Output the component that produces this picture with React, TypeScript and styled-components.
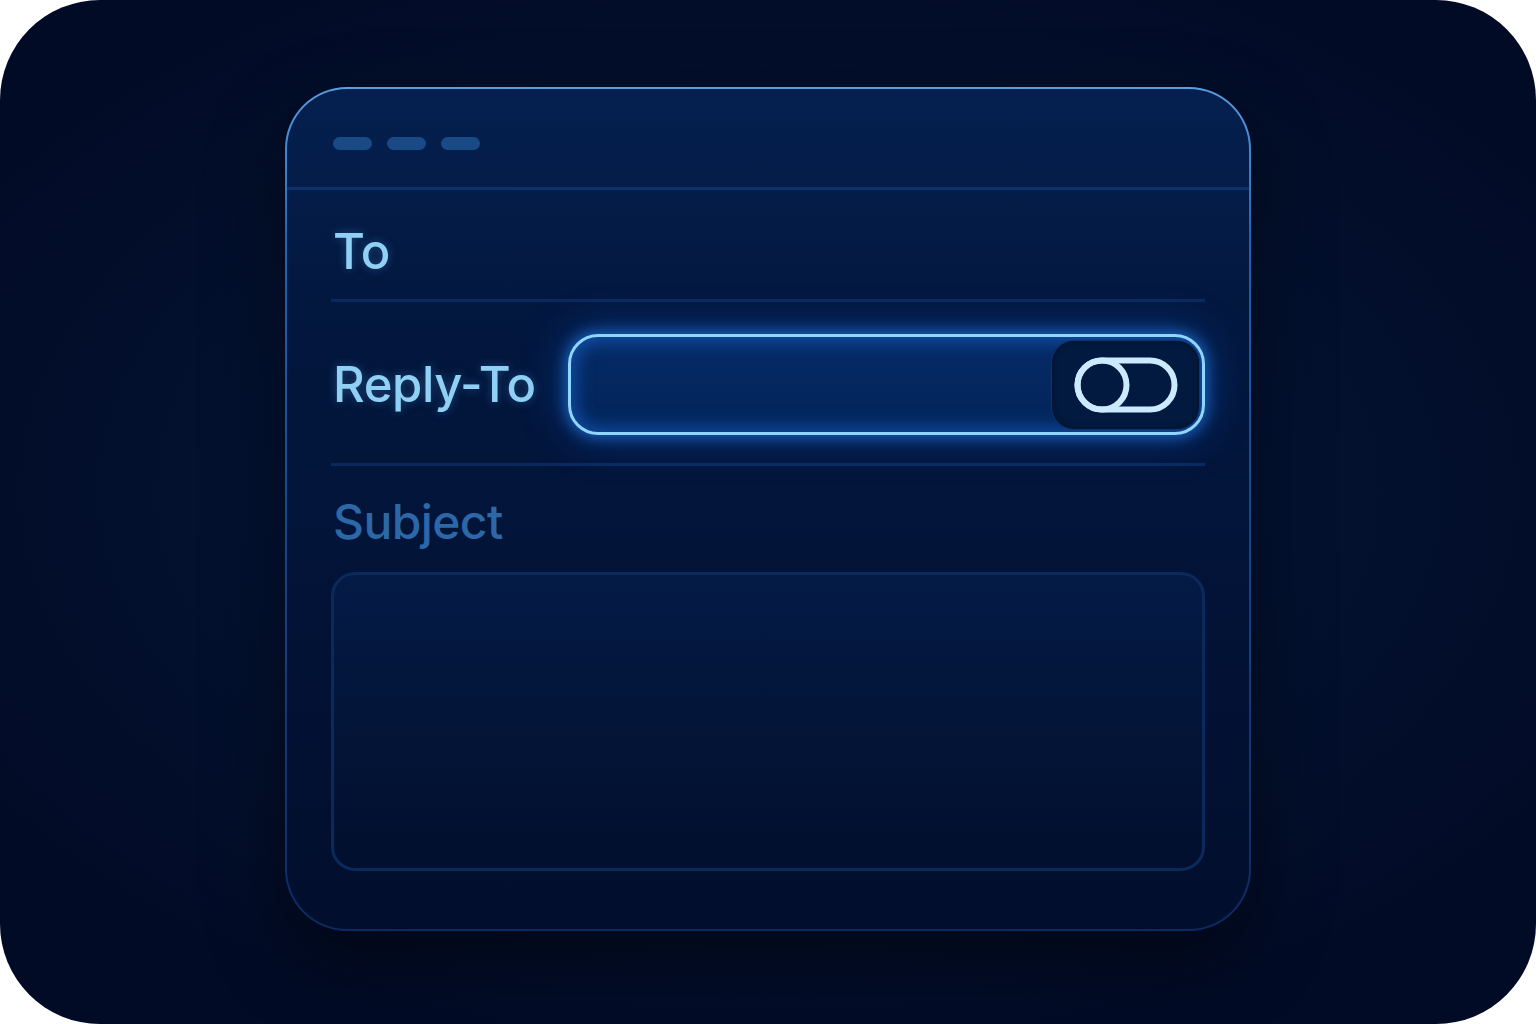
import React from "react";
import styled, { createGlobalStyle } from "styled-components";

const GlobalStyle = createGlobalStyle`
  html, body {
    margin: 0;
    padding: 0;
    background: #ffffff;
  }
  * {
    box-sizing: border-box;
  }
`;

const Frame = styled.div`
  width: 1536px;
  height: 1024px;
  border-radius: 100px;
  overflow: hidden;
  background: radial-gradient(ellipse 60% 55% at 50% 48%, #061a45 0%, #03112f 60%, #020b26 100%);
  display: flex;
  justify-content: center;
  padding-top: 87px;
  font-family: Inter, "Noto Sans", sans-serif;
`;

const Card = styled.div`
  width: 966px;
  height: 844px;
  border-radius: 62px;
  border: 2px solid transparent;
  background:
    linear-gradient(180deg, #052050 0%, #03183f 25%, #021337 60%, #020e2d 100%) padding-box,
    linear-gradient(180deg, #5b9fe0 0%, #2463ae 18%, #17488c 50%, #0c2a62 100%) border-box;
  box-shadow: 0 30px 80px rgba(0, 0, 0, 0.45);
  display: flex;
  flex-direction: column;
  overflow: hidden;
`;

const Header = styled.div`
  height: 101px;
  display: flex;
  align-items: center;
  gap: 15px;
  padding-left: 46px;
  padding-top: 10px;
  border-bottom: 3px solid #0d3169;
`;

const Dot = styled.span`
  width: 39px;
  height: 13px;
  border-radius: 7px;
  background: #1a4a86;
`;

const Body = styled.div`
  flex: 1;
  display: flex;
  flex-direction: column;
  padding: 0 44px 58px 44px;
`;

const Row = styled.div<{ $h: number; $shift?: number; $divider?: boolean }>`
  height: ${(p) => p.$h}px;
  padding-top: ${(p) => (p.$shift ?? 0) * 2}px;
  display: flex;
  align-items: center;
  gap: 32px;
  border-bottom: ${(p) => (p.$divider ? "3px solid #0a2a5e" : "none")};
`;

const Label = styled.span<{ $dim?: boolean }>`
  font-size: ${(p) => (p.$dim ? 48 : 49)}px;
  font-weight: 500;
  letter-spacing: ${(p) => (p.$dim ? "-0.6px" : "-0.4px")};
  padding-left: 2px;
  color: ${(p) => (p.$dim ? "#2c67a8" : "#8fd0f4")};
  text-shadow: ${(p) => (p.$dim ? "none" : "0 0 10px rgba(90, 170, 240, 0.35)")};
`;

const Input = styled.div`
  flex: 1;
  height: 101px;
  border-radius: 30px;
  border: 3px solid #8ed6ff;
  background: linear-gradient(180deg, #062b66 0%, #03245a 100%);
  box-shadow:
    0 0 14px 3px rgba(40, 140, 255, 0.55),
    0 0 40px 8px rgba(20, 100, 230, 0.3),
    inset 0 0 18px 4px rgba(30, 120, 240, 0.5);
  display: flex;
  justify-content: flex-end;
  align-items: center;
  padding-right: 3px;
`;

const ToggleWell = styled.div`
  width: 147px;
  height: 88px;
  border-radius: 22px;
  background: #031a40;
  box-shadow: inset 0 0 6px rgba(0, 0, 0, 0.4), 0 0 0 1px #0c3470;
  display: flex;
  align-items: center;
  justify-content: center;
`;

const TextArea = styled.div`
  flex: 1;
  margin-top: 4px;
  border-radius: 24px;
  border: 3px solid #0b2a5c;
  background: linear-gradient(180deg, #041b46 0%, #031538 50%, #020f2e 100%);
`;

const ToggleIcon = () => (
  <svg width="104" height="56" viewBox="0 0 104 56" fill="none">
    <rect x="3.5" y="3.5" width="97" height="49" rx="24.5" stroke="#cbe9ff" strokeWidth="6" />
    <circle cx="28" cy="28" r="24.5" stroke="#cbe9ff" strokeWidth="6" />
  </svg>
);

export default function App() {
  return (
    <>
      <GlobalStyle />
      <Frame>
        <Card>
          <Header>
            <Dot />
            <Dot />
            <Dot />
          </Header>
          <Body>
            <Row $h={112} $shift={7} $divider>
              <Label>To</Label>
            </Row>
            <Row $h={164} $shift={2} $divider>
              <Label>Reply-To</Label>
              <Input>
                <ToggleWell>
                  <ToggleIcon />
                </ToggleWell>
              </Input>
            </Row>
            <Row $h={102} $shift={4}>
              <Label $dim>Subject</Label>
            </Row>
            <TextArea />
          </Body>
        </Card>
      </Frame>
    </>
  );
}
